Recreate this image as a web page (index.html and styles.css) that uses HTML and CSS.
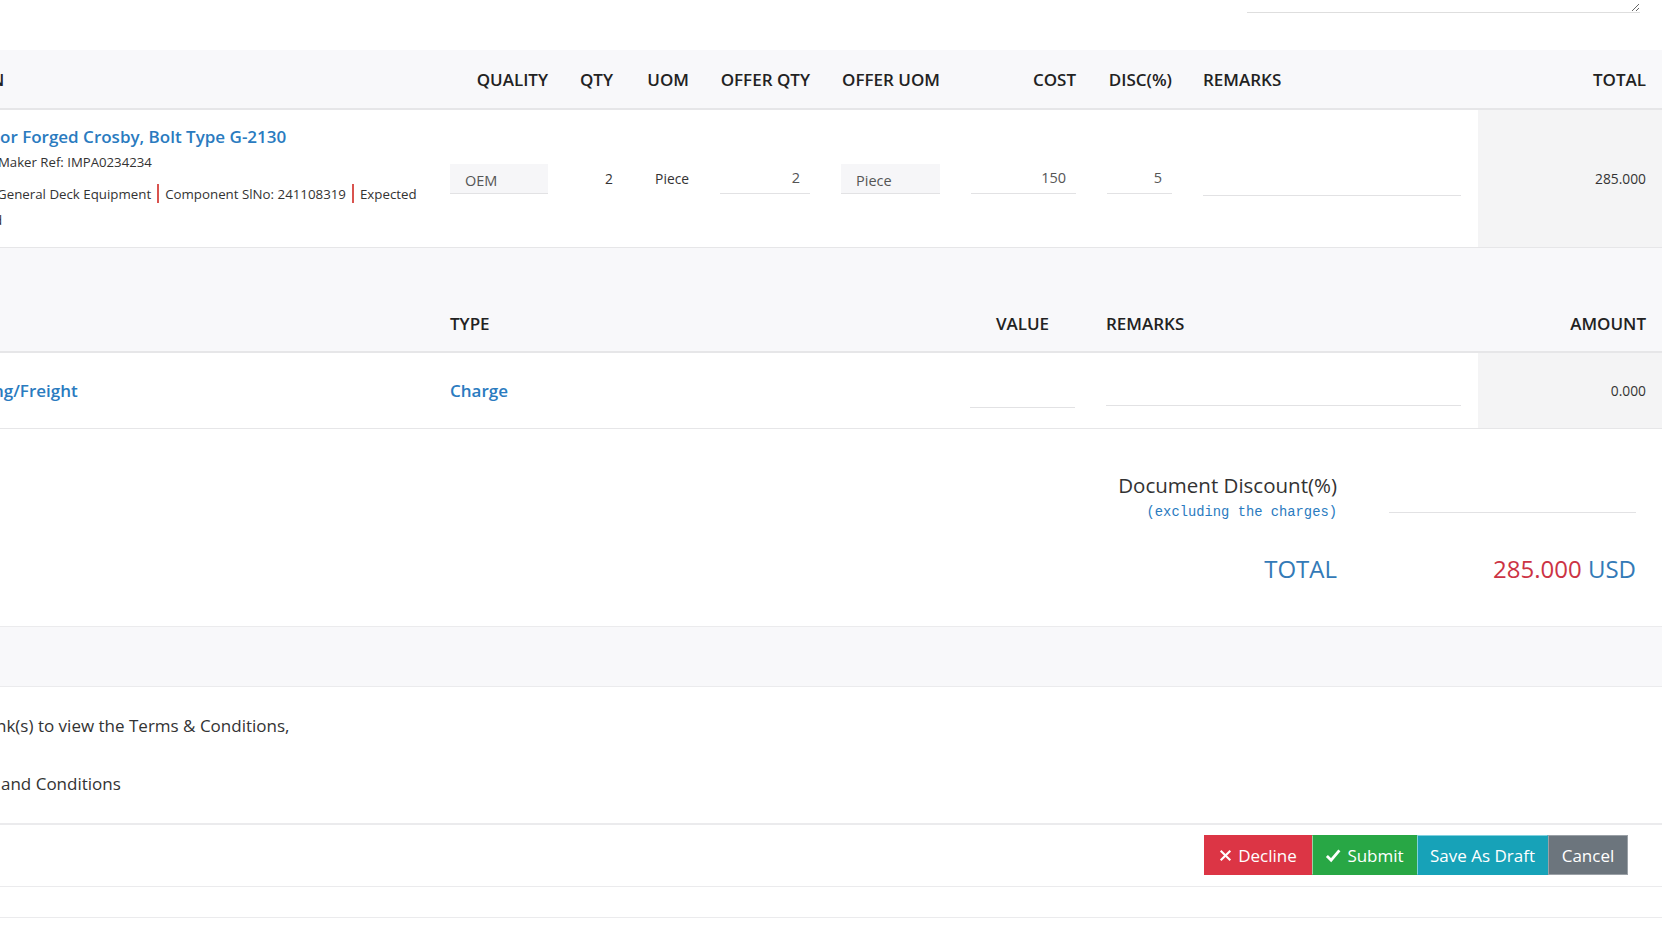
FILE: index.html
```html
<!DOCTYPE html>
<html lang="en">
<head>
<meta charset="utf-8">
<title>Quotation</title>
<link rel="stylesheet" href="styles.css">
</head>
<body>
<div class="page">
  <div class="notes-row">
    <textarea class="notes" aria-label="Notes"></textarea>
  </div>

  <div class="items">
    <div class="items-grid items-head">
      <div class="cell clip"><span class="cut-n">N</span></div>
      <div class="cell right">QUALITY</div>
      <div class="cell right">QTY</div>
      <div class="cell right">UOM</div>
      <div class="cell right">OFFER QTY</div>
      <div class="cell right">OFFER UOM</div>
      <div class="cell right">COST</div>
      <div class="cell right">DISC(%)</div>
      <div class="cell">REMARKS</div>
      <div class="cell right total-h">TOTAL</div>
    </div>
    <div class="items-grid items-row">
      <div class="cell clip item-info">
        <a class="item-name" href="#">or Forged Crosby, Bolt Type G-2130</a>
        <div class="item-ref"><span class="cut-m">Maker Ref: IMPA0234234</span></div>
        <p class="item-meta"><span class="cut-g">General Deck Equipment</span><span class="sep"></span>Component SlNo: 241108319<span class="sep"></span>Expected<br><span class="cut-d">d</span></p>
      </div>
      <div class="cell"><div class="select-box">OEM</div></div>
      <div class="cell right txt">2</div>
      <div class="cell right txt">Piece</div>
      <div class="cell"><input class="line-input num" value="2" aria-label="Offer qty"></div>
      <div class="cell"><div class="select-box">Piece</div></div>
      <div class="cell"><input class="line-input num" value="150" aria-label="Cost"></div>
      <div class="cell"><input class="line-input num" value="5" aria-label="Discount"></div>
      <div class="cell"><input class="line-input remarks" aria-label="Remarks"></div>
      <div class="cell right total-cell">285.000</div>
    </div>
  </div>

  <div class="charges">
    <div class="charges-grid charges-head">
      <div class="cell"></div>
      <div class="cell">TYPE</div>
      <div class="cell center">VALUE</div>
      <div class="cell">REMARKS</div>
      <div class="cell right total-h">AMOUNT</div>
    </div>
    <div class="charges-grid charges-row">
      <div class="cell clip"><a class="item-name cut-ng" href="#">ng/Freight</a></div>
      <div class="cell"><a class="item-name" href="#">Charge</a></div>
      <div class="cell"><input class="line-input num charge-value" aria-label="Value"></div>
      <div class="cell"><input class="line-input" aria-label="Charge remarks"></div>
      <div class="cell right total-cell">0.000</div>
    </div>
  </div>

  <div class="summary">
    <div class="sum-label">
      <div class="disc-title">Document Discount(%)</div>
      <div class="disc-note">(excluding the charges)</div>
    </div>
    <div class="sum-value disc-value"><input class="line-input doc-disc" aria-label="Document discount"></div>
    <div class="sum-label total-label">TOTAL</div>
    <div class="sum-value total-value"><span class="amount">285.000</span> USD</div>
  </div>

  <div class="bar"></div>

  <div class="terms">
    <p class="clip"><span class="cut-n2">nk(s) to view the Terms &amp; Conditions,</span></p>
    <p>and Conditions</p>
  </div>

  <div class="actions">
    <div class="btn-group">
      <button class="btn btn-decline"><svg class="ico" viewBox="0 0 16 16" width="13" height="13"><path d="M3 3 L13 13 M13 3 L3 13" stroke="#fff" stroke-width="2.6" stroke-linecap="square" fill="none"/></svg>Decline</button>
      <button class="btn btn-submit"><svg class="ico" viewBox="0 0 16 16" width="16" height="15"><path d="M1.5 8.5 L6 13 L14.8 2.6" stroke="#fff" stroke-width="3" fill="none" stroke-linejoin="miter"/></svg>Submit</button>
      <button class="btn btn-draft">Save As Draft</button>
      <button class="btn btn-cancel">Cancel</button>
    </div>
  </div>
  <div class="footer-gap"></div>
</div>
</body>
</html>
```

FILE: styles.css
```css
* { box-sizing: border-box; }
html, body { margin: 0; padding: 0; }
body {
  font-family: "Open Sans", "Noto Sans", sans-serif;
  color: #333;
  background: #fff;
  overflow: hidden;
  width: 1664px;
  height: 936px;
}
.page { width: 1662px; }

.notes-row {
  height: 50px;
  display: flex;
  justify-content: flex-end;
  padding-right: 22px;
}
.notes {
  width: 393px;
  height: 13px;
  min-height: 13px;
  border: none;
  border-bottom: 1px solid #dedede;
  padding: 0;
  resize: vertical;
  outline: none;
  font-family: inherit;
}

.cell { min-width: 0; }
.right { text-align: right; }
.center { text-align: center; }
.clip { overflow: hidden; white-space: nowrap; }

.items-grid {
  display: grid;
  grid-template-columns: 419px 98px 34px 45px 90px 99px 105px 65px 258px 1fr;
  column-gap: 31px;
}
.items-head, .charges-head {
  background: #f8f8fa;
  border-bottom: 2px solid #e6e6e8;
  font-size: 17px;
  font-weight: 600;
  color: #222;
}
.items-head {
  height: 60px;
  align-items: center;
}
.total-h { padding-right: 16px; margin-left: -14px; }
.cut-n { display: inline-block; margin-left: -9px; }

.items-row {
  border-bottom: 1px solid #e6e6e8;
  align-items: center;
}
.item-info { padding: 14px 0 14px; }
.item-name {
  display: block;
  color: #2a7bbf;
  font-size: 17px;
  font-weight: 600;
  line-height: 26px;
  text-decoration: none;
}
.item-ref {
  font-size: 13.2px;
  line-height: 20px;
  margin-top: 2px;
  color: #333;
}
.cut-m { display: inline-block; margin-left: -2px; }
.item-meta {
  margin: 9px 0 0;
  font-size: 13.3px;
  line-height: 26px;
  color: #333;
}
.cut-g { display: inline-block; margin-left: -3px; }
.cut-d { display: inline-block; margin-left: -6px; }
.sep {
  display: inline-block;
  width: 2px;
  height: 19px;
  background: #d9534f;
  vertical-align: -4px;
  margin: 0 6px 0 6px;
}
.txt { font-size: 13.8px; color: #333; }

.select-box {
  height: 30px;
  background: #f6f6f8;
  border-bottom: 1px solid #e2e2e4;
  font-size: 14.5px;
  color: #555;
  padding: 6px 0 0 15px;
  line-height: 22px;
}
.line-input {
  display: block;
  width: 100%;
  height: 30px;
  border: none;
  border-bottom: 1px solid #e2e2e4;
  background: transparent;
  font-family: inherit;
  font-size: 14.5px;
  color: #555;
  padding: 0 10px 2px;
  outline: none;
}
.line-input.num { text-align: right; }
.remarks { height: 35px; }

.total-cell {
  align-self: stretch;
  background: #f4f4f5;
  margin-left: -14px;
  padding-right: 16px;
  display: flex;
  align-items: center;
  justify-content: flex-end;
  font-size: 13.8px;
  color: #333;
}

.charges-grid {
  display: grid;
  grid-template-columns: 419px 489px 105px 355px 1fr;
  column-gap: 31px;
}
.charges-head {
  height: 105px;
  align-items: end;
  padding-bottom: 16px;
}
.charges-row {
  height: 76px;
  border-bottom: 1px solid #e6e6e8;
  align-items: center;
}
.cut-ng { margin-left: -7px; display: inline-block; }
.charge-value { margin-top: 4px; }

.summary {
  display: grid;
  grid-template-columns: 1fr 247px;
  column-gap: 52px;
  padding: 41px 26px 39px 0;
  align-items: end;
}
.sum-label { text-align: right; }
.disc-title {
  font-size: 20.5px;
  line-height: 30px;
  color: #333;
}
.disc-note {
  font-family: "Liberation Mono", "DejaVu Sans Mono", monospace;
  font-size: 13.8px;
  line-height: 20px;
  color: #2a7bbf;
  margin-top: 3px;
}
.disc-value { padding-bottom: 10px; }
.doc-disc { height: 34px; }
.total-label, .total-value {
  margin-top: 28px;
  font-size: 24px;
  line-height: 36px;
  color: #337ab7;
}
.total-value { text-align: right; }
.amount { color: #cc3344; }

.bar {
  height: 61px;
  background: #f8f8fa;
  border-top: 1px solid #ebebed;
  border-bottom: 1px solid #ebebed;
}

.terms {
  padding: 27px 0 27px;
  border-bottom: 2px solid #ebebed;
  font-size: 17px;
  line-height: 24px;
  color: #333;
}
.terms p { margin: 0; }
.terms p + p { margin-top: 34px; }
.cut-n2 { display: inline-block; margin-left: -4px; }
.terms p:last-child { padding-left: 1px; }

.actions {
  display: flex;
  justify-content: flex-end;
  padding: 10px 34px 11px 0;
  border-bottom: 1px solid #ebebed;
}
.btn-group { display: flex; }
.btn {
  height: 40px;
  border: 1px solid transparent;
  font-family: inherit;
  font-size: 17px;
  color: #fff;
  padding: 0 12px;
  display: flex;
  align-items: center;
  gap: 6px;
  cursor: pointer;
}
.btn-decline { background: #dc3545; border-color: #dc3545; width: 108px; justify-content: center; }
.btn-submit { background: #28a745; border-color: #28a745; border-left-color: #9ad3a5; width: 105px; justify-content: center; }
.btn-draft { background: #17a2b8; border-color: #7fd0de #17a2b8 #17a2b8 #7fd0de; width: 131px; justify-content: center; }
.btn-cancel { background: #6c757d; border-color: #9aa0a6; width: 80px; justify-content: center; }
.ico { flex: none; }

.footer-gap {
  height: 31px;
  border-bottom: 1px solid #ebebed;
}
```
